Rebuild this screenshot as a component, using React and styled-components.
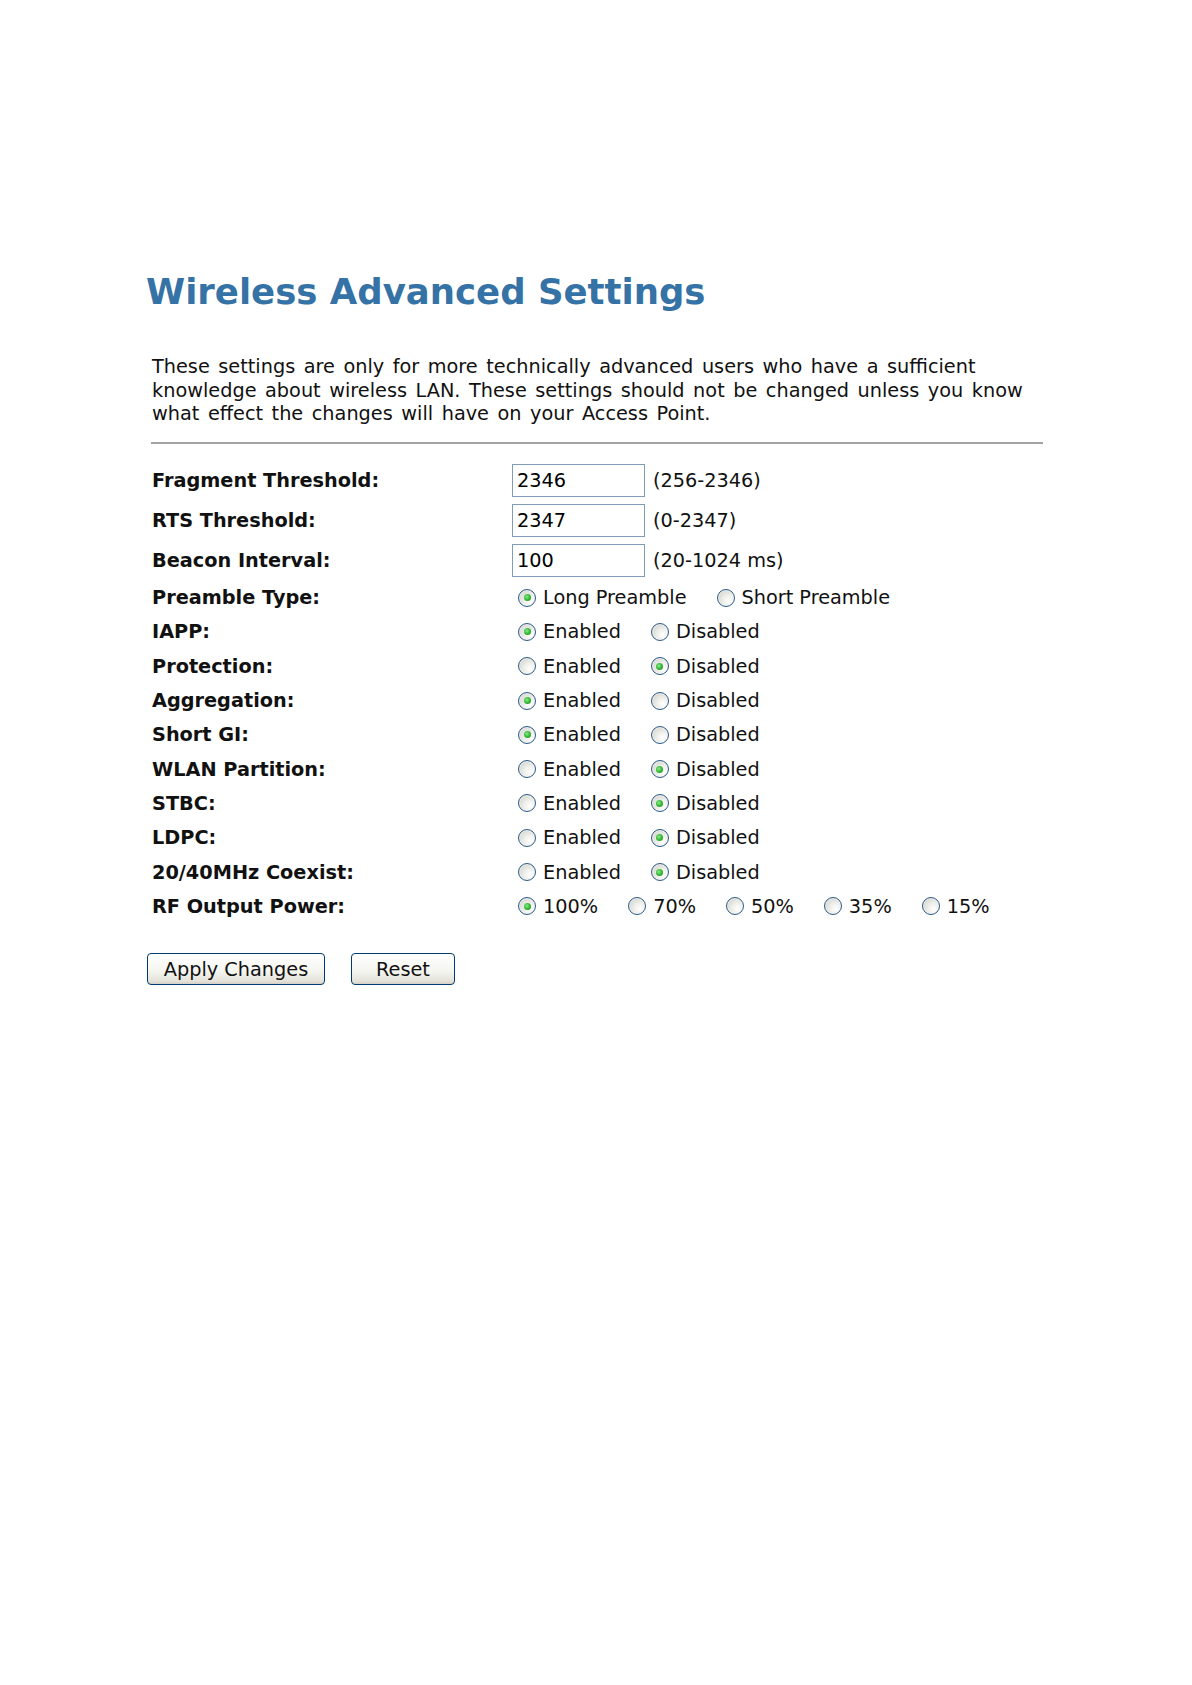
import React from "react";
import styled, { createGlobalStyle } from "styled-components";

const GlobalStyle = createGlobalStyle`
  html, body {
    margin: 0;
    padding: 0;
    background: #ffffff;
  }
  body {
    font-family: "DejaVu Sans", Verdana, sans-serif;
    color: #000000;
  }
`;

const textFields = [
  { label: "Fragment Threshold:", value: "2346", hint: "(256-2346)" },
  { label: "RTS Threshold:", value: "2347", hint: "(0-2347)" },
  { label: "Beacon Interval:", value: "100", hint: "(20-1024 ms)" },
];

const radioFields = [
  { name: "preamble", label: "Preamble Type:", options: ["Long Preamble", "Short Preamble"], checked: 0 },
  { name: "iapp", label: "IAPP:", options: ["Enabled", "Disabled"], checked: 0 },
  { name: "protection", label: "Protection:", options: ["Enabled", "Disabled"], checked: 1 },
  { name: "aggregation", label: "Aggregation:", options: ["Enabled", "Disabled"], checked: 0 },
  { name: "shortgi", label: "Short GI:", options: ["Enabled", "Disabled"], checked: 0 },
  { name: "partition", label: "WLAN Partition:", options: ["Enabled", "Disabled"], checked: 1 },
  { name: "stbc", label: "STBC:", options: ["Enabled", "Disabled"], checked: 1 },
  { name: "ldpc", label: "LDPC:", options: ["Enabled", "Disabled"], checked: 1 },
  { name: "coexist", label: "20/40MHz Coexist:", options: ["Enabled", "Disabled"], checked: 1 },
  { name: "power", label: "RF Output Power:", options: ["100%", "70%", "50%", "35%", "15%"], checked: 0 },
];

export default function App() {
  return (
    <Page>
      <GlobalStyle />
      <Title>Wireless Advanced Settings</Title>
      <Intro>
        These settings are only for more technically advanced users who have a sufficient
        <br />
        knowledge about wireless LAN. These settings should not be changed unless you know
        <br />
        what effect the changes will have on your Access Point.
      </Intro>
      <Divider />
      <Form>
        {textFields.map((f) => (
          <Row key={f.label} tall>
            <Label>{f.label}</Label>
            <Field>
              <TextBox defaultValue={f.value} />
              <Hint>{f.hint}</Hint>
            </Field>
          </Row>
        ))}
        {radioFields.map((f) => (
          <Row key={f.name}>
            <Label>{f.label}</Label>
            <Field>
              {f.options.map((opt, i) => (
                <Option key={opt}>
                  <Radio type="radio" name={f.name} defaultChecked={i === f.checked} />
                  <span>{opt}</span>
                </Option>
              ))}
            </Field>
          </Row>
        ))}
      </Form>
      <Buttons>
        <Button type="button" width={178}>Apply Changes</Button>
        <Button type="button" width={104}>Reset</Button>
      </Buttons>
    </Page>
  );
}

const Page = styled.div`
  padding: 269px 0 0 147px;
  width: 900px;
  min-height: 1416px;
`;

const Title = styled.h1`
  margin: 3px 0 0 -1px;
  font-family: "DejaVu Sans", Verdana, sans-serif;
  font-weight: bold;
  font-size: 35.5px;
  line-height: 40px;
  color: #3572a5;
`;

const Intro = styled.p`
  margin: 43px 0 0 5px;
  font-size: 19.3px;
  line-height: 23.5px;
  word-spacing: 2.4px;
  color: #111;
  white-space: nowrap;
`;

const Divider = styled.hr`
  margin: 16px 0 0 4px;
  width: 892px;
  height: 0;
  border: none;
  border-top: 2px solid #a3a3a3;
`;

const Form = styled.div`
  margin: 17px 0 0 5px;
  display: flex;
  flex-direction: column;
`;

const Row = styled.div`
  display: grid;
  grid-template-columns: 360px 1fr;
  align-items: center;
  height: ${(p) => (p.tall ? "40px" : "34.3px")};
`;

const Label = styled.div`
  font-weight: bold;
  font-size: 19.3px;
  color: #111;
`;

const Field = styled.div`
  display: flex;
  align-items: center;
  font-size: 19.3px;
  color: #111;
`;

const TextBox = styled.input`
  box-sizing: border-box;
  width: 133px;
  height: 33px;
  border: 1px solid #7f9db9;
  padding: 0 4px;
  font-family: "DejaVu Sans", Verdana, sans-serif;
  font-size: 19.3px;
  color: #000;
  background: #fff;
  outline: none;
`;

const Hint = styled.span`
  margin-left: 8px;
`;

const Option = styled.label`
  display: flex;
  align-items: center;
  gap: 7px;
  margin-left: 6px;
  margin-right: 24px;
  &:last-child {
    margin-right: 0;
  }
`;

const Radio = styled.input`
  appearance: none;
  margin: 0;
  width: 18px;
  height: 18px;
  border-radius: 50%;
  border: 1px solid #2a5a8a;
  background: radial-gradient(circle at 68% 68%, #ffffff 0%, #f0f0ec 35%, #cbcbc2 100%);
  box-shadow: inset 0 0 0 1px rgba(255, 255, 255, 0.5);
  position: relative;
  flex: none;
  &:checked::after {
    content: "";
    position: absolute;
    left: 4.5px;
    top: 4.5px;
    width: 7px;
    height: 7px;
    border-radius: 50%;
    background: radial-gradient(circle at 40% 40%, #8ae88a 0%, #2fb52f 55%, #178717 100%);
  }
`;

const Buttons = styled.div`
  display: flex;
  gap: 26px;
  margin-top: 30px;
`;

const Button = styled.button`
  box-sizing: border-box;
  width: ${(p) => p.width}px;
  height: 32px;
  border: 1px solid #003c74;
  border-radius: 4px;
  background: linear-gradient(to bottom, #ffffff 0%, #f4f4ef 60%, #e3e2da 90%, #d6d0c5 100%);
  font-family: "DejaVu Sans", Verdana, sans-serif;
  font-size: 19.3px;
  color: #111;
  padding: 0;
  cursor: pointer;
`;
